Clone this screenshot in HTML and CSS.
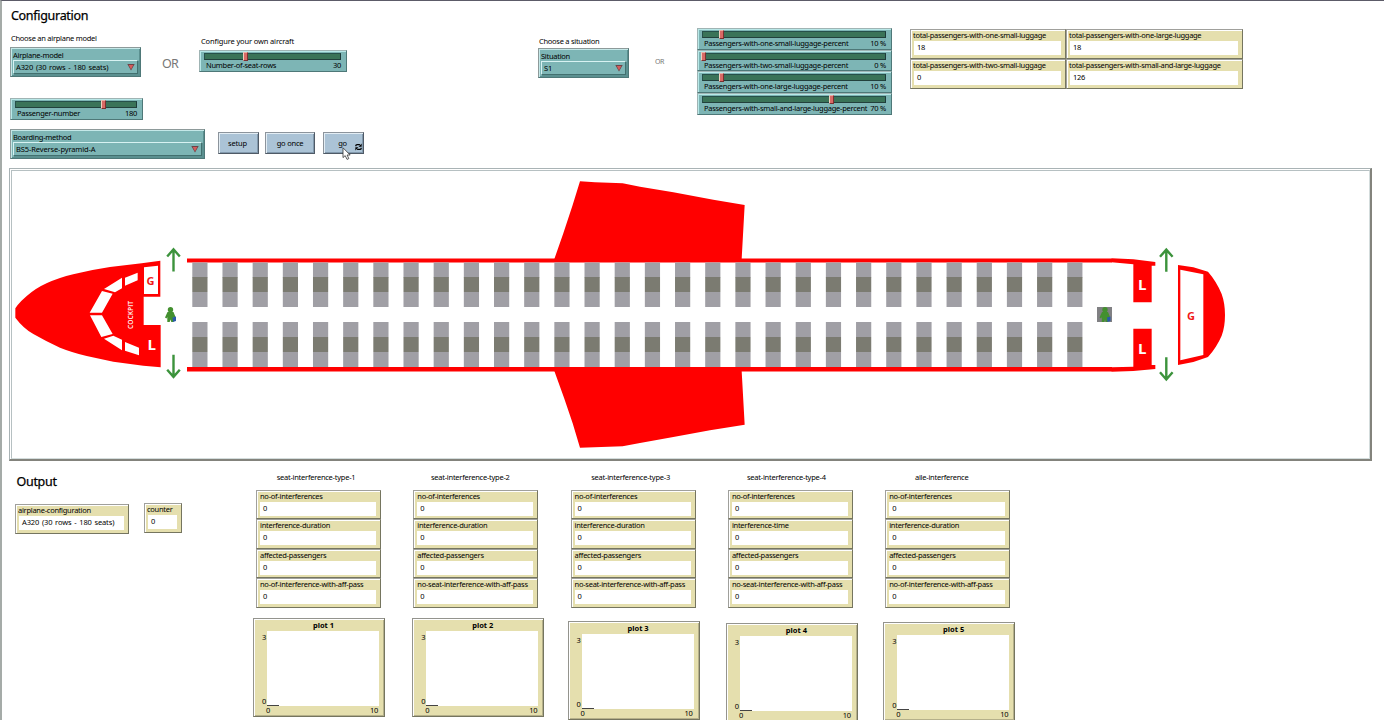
FILE: index.html
```html
<!DOCTYPE html>
<html lang="en">
<head>
<meta charset="utf-8">
<title>Airplane boarding model</title>
<link rel="stylesheet" href="styles.css">
</head>
<body>
<main class="page">
  <section class="config">
    <div class="setup-col">
      <h1 class="heading">Configuration</h1>
      <div class="model-row">
        <div class="field field-model">
          <p class="note">Choose an airplane model</p>
          <div class="chooser"><span class="label">Airplane-model</span><div class="select"><span>A320 (30 rows - 180 seats)</span><i class="caret"></i></div></div>
        </div>
        <span class="or">OR</span>
        <div class="field field-rows">
          <p class="note">Configure your own aircraft</p>
          <div class="slider"><div class="track"><i class="thumb" style="margin-left:28%"></i></div><div class="caption"><span>Number-of-seat-rows</span><span>30</span></div></div>
        </div>
      </div>
      <div class="slider slider-passengers"><div class="track"><i class="thumb" style="margin-left:71%"></i></div><div class="caption"><span>Passenger-number</span><span>180</span></div></div>
      <div class="method-row">
        <div class="chooser chooser-method"><span class="label">Boarding-method</span><div class="select"><span>BS5-Reverse-pyramid-A</span><i class="caret"></i></div></div>
        <button class="btn btn-setup">setup</button>
        <button class="btn btn-once">go once</button>
        <button class="btn btn-go">go
          <svg class="loop" viewBox="0 0 8 8"><path d="M1 3.2V2.4Q1 1.2 2.4 1.2H5.6M7 4.8V5.6Q7 6.8 5.6 6.8H2.4" fill="none" stroke="#000" stroke-width="1.5"/><path d="M7.6 0V3.8H4ZM.4 8V4.2H4Z"/></svg>
          <svg class="cursor" viewBox="0 0 9 13"><path d="M1 .8V10.6L3.2 8.6L5 12.4L6.8 11.6L5.1 8H8.2Z" fill="#fff" stroke="#333" stroke-width=".8"/></svg>
        </button>
      </div>
    </div>
    <div class="situation-col">
      <p class="note">Choose a situation</p>
      <div class="chooser"><span class="label">Situation</span><div class="select"><span>S1</span><i class="caret"></i></div></div>
    </div>
    <span class="or or-small">OR</span>
    <div class="luggage-sliders">
      <div class="slider"><div class="track"><i class="thumb" style="margin-left:9%"></i></div><div class="caption"><span>Passengers-with-one-small-luggage-percent</span><span>10 %</span></div></div>
      <div class="slider"><div class="track"><i class="thumb" style="margin-left:-1%"></i></div><div class="caption"><span>Passengers-with-two-small-luggage-percent</span><span>0 %</span></div></div>
      <div class="slider"><div class="track"><i class="thumb" style="margin-left:9%"></i></div><div class="caption"><span>Passengers-with-one-large-luggage-percent</span><span>10 %</span></div></div>
      <div class="slider"><div class="track"><i class="thumb" style="margin-left:69%"></i></div><div class="caption"><span>Passengers-with-small-and-large-luggage-percent</span><span>70 %</span></div></div>
    </div>
    <div class="totals">
      <div class="monitor"><span class="label">total-passengers-with-one-small-luggage</span><output>18</output></div>
      <div class="monitor"><span class="label">total-passengers-with-one-large-luggage</span><output>18</output></div>
      <div class="monitor"><span class="label">total-passengers-with-two-small-luggage</span><output>0</output></div>
      <div class="monitor"><span class="label">total-passengers-with-small-and-large-luggage</span><output>126</output></div>
    </div>
  </section>

  <section class="world">
    <svg class="view" viewBox="12 171 1357 287">
      <defs>
        <g id="person"><circle cx="7.5" cy="2.8" r="2.7"/><path d="M4.5 5H10.5L12.5 10L11 11L10.5 10V15H8.3L7.5 12.5L6.700 15H4.300V10L3.500 11.500L2 10.500Z"/><path d="M9.500 10.500L13 9.500V14L10 15Z" fill="#2a5aa8"/></g>
        <path id="exit" d="M-6.300 9L0 1.800L6.300 9M0 1.800V24" fill="none" stroke="#3c933c" stroke-width="2.400"/>
      </defs>
      <!-- cabin walls, wings and seats -->
      <g fill="#f00">
        <path d="M187 258.500H1112V262.500H187ZM187 367H1112V371.500H187Z"/>
        <g transform="translate(540 165) scale(.33333)">
          <path d="M43 282L70 205L98 120L120 49L165 52L248 55L300 65L400 82L520 104L614 120L605 282ZM43 618L72 698L98 775L120 848L248 844L300 834L400 816L510 796L614 779L605 618Z"/>
        </g>
      </g>
      <g fill="none" stroke-width="15" stroke-dasharray="15.200 14.970">
        <path d="M192.300 270H1083M192.300 299.500H1083M192.300 329.500H1083M192.300 359.500H1083" stroke="#a09fa5"/>
        <path d="M192.300 284.500H1083M192.300 344.500H1083" stroke="#7b7b71"/>
      </g>
      <!-- nose and cockpit -->
      <g transform="translate(0 165) scale(.33333)">
        <path fill="#f00" d="M46 430Q60 408 95 381Q120 362 155 348Q200 330 240 323Q285 313 330 306L425 295L481 287V395H431V480H482V607L430 602L340 590L260 573Q215 562 180 548Q140 530 100 507Q70 490 46 458Z"/>
        <path fill="#fff" d="M432 307L474 302V387H432ZM375 338L413 323V346L375 362ZM366 338V370L345 382L312 372ZM306 378L338 386L306 443H269ZM270 451H306L338 507L304 516ZM312 521L340 512L366 524V556ZM375 531L417 548V571L375 557Z"/>
      </g>
      <text class="mark mark-red" x="146.500" y="284.500">G</text>
      <text class="mark mark-l" x="147.500" y="350.300">L</text>
      <text class="mark mark-cockpit" transform="translate(132.600 329) rotate(-90)" textLength="28" lengthAdjust="spacingAndGlyphs">COCKPIT</text>
      <!-- tail -->
      <g transform="translate(1050 165) scale(.33333)">
        <path fill="#f00" d="M185 280L250 283L316 291V302H305V412H250V298L185 292ZM185 620L250 618L316 612V600H305V491H250V605L185 607ZM384 300L430 307L474 320Q500 350 515 387Q525 415 525 450Q525 486 515 512Q500 547 474 576L430 591L384 600Z"/>
        <path fill="#fff" d="M391 314L460 328V570L391 586Z"/>
      </g>
      <text class="mark mark-l" x="1138" y="290.300">L</text>
      <text class="mark mark-l" x="1138" y="354.300">L</text>
      <text class="mark mark-red" x="1187" y="319.500">G</text>
      <use href="#exit" x="173.500" y="247.500"/>
      <use href="#exit" transform="translate(173.500 378.700) scale(1 -1)"/>
      <use href="#exit" x="1166.300" y="247.800"/>
      <use href="#exit" transform="translate(1166.300 381.300) scale(1 -1)"/>
      <use href="#person" x="163" y="307" fill="#43902f"/>
      <path d="M1097 307H1112V322H1097Z" fill="#808083"/>
      <use href="#person" x="1097.500" y="307" fill="#43902f"/>
    </svg>
  </section>

  <section class="output">
    <div class="summary">
      <h1 class="heading">Output</h1>
      <div class="summary-row">
        <div class="monitor monitor-config"><span class="label">airplane-configuration</span><output>A320 (30 rows - 180 seats)</output></div>
        <div class="monitor monitor-counter"><span class="label">counter</span><output>0</output></div>
      </div>
    </div>
    <div class="stat">
      <p class="note">seat-interference-type-1</p>
      <div class="monitor"><span class="label">no-of-interferences</span><output>0</output></div>
      <div class="monitor"><span class="label">interference-duration</span><output>0</output></div>
      <div class="monitor"><span class="label">affected-passengers</span><output>0</output></div>
      <div class="monitor"><span class="label">no-of-interference-with-aff-pass</span><output>0</output></div>
      <div class="plot plot-1"><b>plot 1</b><div class="y-axis"><span>3</span><span>0</span></div><div class="canvas"></div><div class="x-axis"><span>0</span><span>10</span></div></div>
    </div>
    <div class="stat">
      <p class="note note-2">seat-interference-type-2</p>
      <div class="monitor"><span class="label">no-of-interferences</span><output>0</output></div>
      <div class="monitor"><span class="label">interference-duration</span><output>0</output></div>
      <div class="monitor"><span class="label">affected-passengers</span><output>0</output></div>
      <div class="monitor"><span class="label">no-seat-interference-with-aff-pass</span><output>0</output></div>
      <div class="plot plot-2"><b>plot 2</b><div class="y-axis"><span>3</span><span>0</span></div><div class="canvas"></div><div class="x-axis"><span>0</span><span>10</span></div></div>
    </div>
    <div class="stat">
      <p class="note">seat-interference-type-3</p>
      <div class="monitor"><span class="label">no-of-interferences</span><output>0</output></div>
      <div class="monitor"><span class="label">interference-duration</span><output>0</output></div>
      <div class="monitor"><span class="label">affected-passengers</span><output>0</output></div>
      <div class="monitor"><span class="label">no-seat-interference-with-aff-pass</span><output>0</output></div>
      <div class="plot plot-3"><b>plot 3</b><div class="y-axis"><span>3</span><span>0</span></div><div class="canvas"></div><div class="x-axis"><span>0</span><span>10</span></div></div>
    </div>
    <div class="stat">
      <p class="note note-4">seat-interference-type-4</p>
      <div class="monitor"><span class="label">no-of-interferences</span><output>0</output></div>
      <div class="monitor"><span class="label">interference-time</span><output>0</output></div>
      <div class="monitor"><span class="label">affected-passengers</span><output>0</output></div>
      <div class="monitor"><span class="label">no-seat-interference-with-aff-pass</span><output>0</output></div>
      <div class="plot plot-4"><b>plot 4</b><div class="y-axis"><span>3</span><span>0</span></div><div class="canvas"></div><div class="x-axis"><span>0</span><span>10</span></div></div>
    </div>
    <div class="stat">
      <p class="note note-aisle">aile-interference</p>
      <div class="monitor"><span class="label">no-of-interferences</span><output>0</output></div>
      <div class="monitor"><span class="label">interference-duration</span><output>0</output></div>
      <div class="monitor"><span class="label">affected-passengers</span><output>0</output></div>
      <div class="monitor"><span class="label">no-of-interference-with-aff-pass</span><output>0</output></div>
      <div class="plot plot-5"><b>plot 5</b><div class="y-axis"><span>3</span><span>0</span></div><div class="canvas"></div><div class="x-axis"><span>0</span><span>10</span></div></div>
    </div>
  </section>
</main>
</body>
</html>
```
FILE: styles.css
```css
* { box-sizing: border-box; }
html, body { height: 100%; }
body {
  margin: 0;
  overflow: hidden;
  background: #fff;
  color: #000;
  font: 7.5px/10px "Noto Sans", "Open Sans", sans-serif;
  letter-spacing: -0.27px;
  white-space: nowrap;
}
h1, p { margin: 0; font-weight: 400; }
i { display: block; }

.page {
  height: 720px;
  overflow: hidden;
  border-top: 1px solid #5c5b68;
  border-left: 2px solid #a5aba8;
}
.heading { font-size: 12.5px; line-height: 16px; letter-spacing: -0.3px; color: #000; -webkit-text-stroke: .25px #000; }
.note { height: 10px; }

/* configuration */
.config { display: flex; height: 167px; }
.setup-col { width: 536px; padding: 7px 0 0 8px; }
.setup-col .heading { padding-left: 1px; }
.model-row { display: flex; margin-top: 9px; height: 48px; }
.field-model { width: 131px; }
.field-model .note { padding-left: 1px; margin-bottom: 4px; }
.field-rows { width: 148px; margin-left: 20px; padding-top: 3px; }
.field-rows .note { padding-left: 2px; margin-bottom: 4px; letter-spacing: -0.14px; }
.or { width: 16px; margin: 23px 0 0 21px; font-size: 12.5px; line-height: 16px; letter-spacing: -0.8px; color: #777; }
.field-rows { margin-left: 21px; }
.slider-passengers { width: 133px; margin-top: 17px; }
.method-row { display: flex; margin-top: 9px; }
.chooser-method { width: 195px; }

.chooser {
  height: 30px;
  padding: 2px 2px 0;
  border: 1px solid;
  border-color: #8d9a9a #4e7878 #4e7878 #8d9a9a;
  background: #7db5b5;
  box-shadow: inset 1px 1px 0 #c4e8e8, inset -1px -1px 0 #5b9090;
}
.chooser .label { display: block; height: 10px; line-height: 10px; }
.select {
  display: flex;
  justify-content: space-between;
  align-items: center;
  height: 14px;
  padding: 0 2px 0 2px;
  border: 1px solid;
  border-color: #d8f2f2 #42706f #42706f #d8f2f2;
  box-shadow: 1px 1px 0 #5b9090;
  line-height: 12px;
  letter-spacing: -0.12px;
  word-spacing: 0.9px;
}
.caret { width: 8px; height: 7px; background: #6e4247; clip-path: polygon(0 0, 100% 0, 50% 100%); display: flex; align-items: flex-start; justify-content: center; }
.caret::before { content: ""; width: 5px; height: 5px; margin-top: 1px; background: #d45c5c; clip-path: polygon(0 0, 100% 0, 50% 100%); }

.slider {
  height: 22px;
  padding: 2px 5px 0 4px;
  border: 1px solid;
  border-color: #9fb4b4 #4e7878 #4e7878 #9fb4b4;
  background: #7db5b5;
  box-shadow: inset 1px 1px 0 #b8e8e8;
}
.track {
  height: 7px;
  border: 1px solid;
  border-color: #26504a #1d3a3a #22403c #26504a;
  background: #3a7358;
}
.thumb { width: 5px; height: 9px; position: relative; top: -2px; border: 1px solid; border-color: #e8b0a8 #7c2f30 #7c2f30 #f0d0c0; background: #d96a66; }
.caption { display: flex; justify-content: space-between; padding-left: 2px; line-height: 11px; }

.btn {
  position: relative;
  height: 22px;
  margin: 3px 0 0 6px;
  padding: 0 2px 0 0;
  border: 1px solid;
  border-color: #8c949c #4f5a66 #4f5a66 #8c949c;
  background: #abc3d6;
  box-shadow: inset 1px 1px 0 #e3edf4, inset -1px -1px 0 #8299ad;
  color: #000;
  font: inherit;
  letter-spacing: -0.2px;
}
.btn-setup { width: 41px; margin-left: 13px; }
.btn-once { width: 50px; margin-left: 6px; padding: 0; }
.btn-go { width: 41px; margin-left: 8px; }
.loop { position: absolute; right: 1px; bottom: 2px; width: 7px; height: 8px; }
.cursor { position: absolute; left: 18px; top: 14px; width: 9px; height: 13px; overflow: visible; }

.situation-col { width: 91px; padding-top: 35px; }
.situation-col .note { padding-left: 1px; margin-bottom: 2px; }
.or-small { width: 10px; margin: 55px 0 0 26px; font-size: 7px; line-height: 12px; letter-spacing: -0.5px; }
.luggage-sliders { width: 195px; margin: 27px 0 0 32px; }
.luggage-sliders .slider { height: 21.7px; }

.totals { display: grid; grid-template: 30px 30px / 156px 177px; margin: 28px 0 0 18px; align-content: start; }

.monitor {
  height: 29.5px;
  padding: 1px 4px 0 3px;
  border: 1px solid;
  border-color: #a0a09c #75755f #75755f #a0a09c;
  background: #e5dfae;
  box-shadow: inset 1px 1px 0 #fff;
}
.totals .monitor { height: 30px; letter-spacing: -0.3px; }
.monitor .label { display: block; height: 10px; line-height: 9px; margin-left: -1px; }
.monitor output { display: block; height: 14px; padding-left: 3px; line-height: 13px; background: #fff; }

/* world view */
.world {
  width: 1363px;
  height: 293px;
  margin-left: 7px;
  padding: 1px 0 0 1px;
  border: 1px solid #a9b3b5;
  border-right: 2px solid #83837c;
  border-bottom: 2px solid #83837c;
}
.view { display: block; width: 1359px; height: 289px; border: 1px solid #b6c0c2; border-right-color: #d3dcdc; border-bottom-color: #d3dcdc; }
.mark { fill: #fff; font-family: "Open Sans", sans-serif; font-weight: 700; letter-spacing: 0; }
.mark-red { fill: #f01818; font-size: 11px; }
.mark-l { font-size: 15px; }
.mark-cockpit { font-size: 7.5px; font-weight: 600; }

/* output */
.output { display: flex; height: 260px; padding-top: 11px; }
.summary { width: 254px; padding: 2px 0 0 13px; }
.summary .heading { padding-left: 1.5px; }
.summary-row { display: flex; margin-top: 13px; }
.monitor-config { width: 114px; height: 30px; margin-top: 1px; }
.monitor-config output { letter-spacing: -0.12px; word-spacing: 0.9px; }
.monitor-counter { width: 38px; height: 30px; margin-left: 15px; }
.stat { width: 125px; margin-right: 32.3px; }
.stat .note { width: 120px; text-align: center; margin-bottom: 8px; letter-spacing: -0.25px; }
.stat .note-2 { width: 114px; }
.stat .note-4 { width: 117px; }
.stat .note-aisle { width: 113px; }
.stat .monitor { height: 29.4px; }
.stat .monitor .label { margin-left: 0; }

.plot {
  display: grid;
  grid-template: 12px 75px 10px / 13px 112px;
  width: 132px;
  height: 99px;
  border: 1px solid;
  border-color: #94948e #75755f #75755f #94948e;
  background: #e5dfae;
  box-shadow: inset 1px 1px 0 #fff, inset -1px -1px 0 #b5b08a;
}
.plot b { grid-column: 1 / 3; padding-left: 14px; line-height: 12px; text-align: center; letter-spacing: 0; }
.y-axis { display: flex; flex-direction: column; justify-content: space-between; padding: 1px 1px 0 0; text-align: right; }
.canvas { background: linear-gradient(#444, #444) 0 74px / 12px 1px no-repeat #fff; }
.x-axis { grid-column: 2; display: flex; justify-content: space-between; padding-right: 1px; margin: -1px 0 0 -1px; }
.plot-1 { margin: 10px 0 0 -3px; }
.plot-2 { margin: 10px 0 0 -1px; }
.plot-3 { margin: 13px 0 0 -3px; }
.plot-4 { margin: 15px 0 0 -2px; }
.plot-5 { margin: 14px 0 0 -2px; }
```
